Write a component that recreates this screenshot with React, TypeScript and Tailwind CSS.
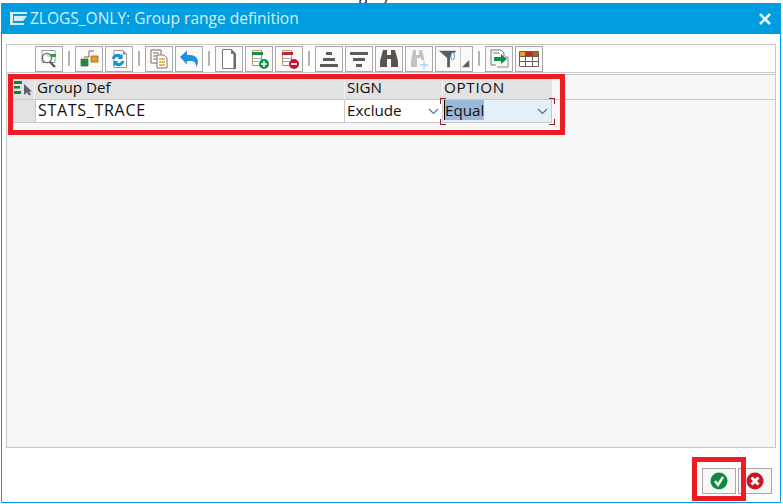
import type { ReactNode } from "react";

function ToolBtn({ children, className = "w-7" }: { children: ReactNode; className?: string }) {
  return (
    <div className={`flex h-[26px] shrink-0 items-center justify-center border border-[#a8a8a8] bg-[#fafafa] ${className}`}>
      <svg width="22" height="22" viewBox="0 0 22 22">
        {children}
      </svg>
    </div>
  );
}

function Sep() {
  return <div className="mx-[5px] h-[15px] w-[2px] shrink-0 bg-[#b4b4b4]" />;
}

function Chevron() {
  return (
    <svg width="11" height="7" viewBox="0 0 11 7" className="shrink-0 self-center">
      <path d="M1 1l4.5 4.5L10 1" fill="none" stroke="#5f7186" strokeWidth="1.2" />
    </svg>
  );
}

const rowIcon = (bar: string) => (
  <>
    <path d="M4.5 2.5h9v15h-9z" fill="#fff" stroke="#b5956f" />
    <path d="M4 4h11v3H4z" fill={bar} />
    <path d="M5 10.5h8M5 13.5h6" stroke="#9aa5ae" />
  </>
);

export default function App() {
  return (
    <div className="relative h-[504px] w-[783px] overflow-hidden bg-white font-['Open_Sans','Noto_Sans',sans-serif] text-[15.2px] text-[#111]">
      {/* what is left of the screen behind the popup */}
      <div className="flex h-[3px] items-end overflow-hidden pl-[327px] leading-[18px] whitespace-nowrap">
        Category Filter: Performance
      </div>

      <div className="ml-[1px] flex h-[500px] w-[780px] flex-col border border-t-0 border-[#009de0] bg-white">
        <div className="flex h-[31px] shrink-0 items-center bg-[#009de0] pl-[8px] pr-[8px] text-[#d9eff9]">
          <svg width="18" height="13" viewBox="0 0 18 13" className="shrink-0">
            <path d="M0 0h17v2H3v9h11v2H0z" fill="#d5ecf7" />
            <path d="M4 4h13l-4 5H4z" fill="#d5ecf7" />
          </svg>
          <span className="ml-[2px] text-[15.5px] leading-none">ZLOGS_ONLY: Group range definition</span>
          <svg width="14" height="14" viewBox="0 0 14 14" className="ml-auto shrink-0">
            <path d="M2 2l10 10M12 2L2 12" stroke="#e6f5fb" strokeWidth="2.6" />
          </svg>
        </div>

        <div className="mx-[4px] mt-[10px] flex h-[404px] shrink-0 flex-col border border-[#c8c8c8] bg-[#f7f7f7]">
          <div className="flex h-[28px] shrink-0 items-center border-b border-[#c8c8c8] bg-white pl-[28px]">
            <ToolBtn>
              <path d="M4 2.5h13v12H4z" fill="#fff" stroke="#9a9a9a" />
              <path d="M9 6h9v3H9z" fill="#2e9b46" />
              <circle cx="9" cy="10" r="4.6" fill="#fff" fillOpacity="0.7" stroke="#6d6d6d" strokeWidth="1.4" />
              <path d="M12 14l5 5" stroke="#555" strokeWidth="2.2" />
            </ToolBtn>
            <Sep />
            <ToolBtn>
              <path d="M11 3h5M11 3v6M6 9h5" fill="none" stroke="#7a6a58" />
              <path d="M3 11h7v7H3z" fill="#1e8a3c" stroke="#6d5c4a" strokeWidth="0.8" />
              <path d="M13 8h7v6h-7z" fill="#e8a21c" stroke="#8a6a2a" strokeWidth="0.8" />
            </ToolBtn>
            <div className="w-[2px]" />
            <ToolBtn>
              <path d="M6 2.5h9l3.5 3.5v13.5H6z" fill="#fff" stroke="#9a9a9a" />
              <path d="M15 2.5v4h3.5z" fill="#8a8a8a" />
              <path d="M4 11a5.5 5.5 0 0 1 9-4l1.5-1.5V11h-5l1.5-1.5a3 3 0 0 0-4.5 1.5zM16 13a5.5 5.5 0 0 1-9 4l-1.5 1.5V13h5L9 14.5a3 3 0 0 0 4.5-1.5z" fill="#1a8fd6" />
            </ToolBtn>
            <Sep />
            <ToolBtn>
              <path d="M3 2h10v13H3z" fill="#fff" stroke="#7a6a5a" />
              <path d="M5 5h6M5 8h6M5 11h6" stroke="#7a6a5a" />
              <path d="M9 7h7l3 3v10H9z" fill="#fff" stroke="#777" />
              <path d="M11 11h6M11 14h6M11 17h6" stroke="#e8a21c" strokeWidth="1.4" />
            </ToolBtn>
            <div className="w-[2px]" />
            <ToolBtn>
              <path d="M2 9l7-6.5v4.5h3c5 0 8 3 8 7 0 2-1 4-2 5 .5-4-2-6-5-6H9v3.5z" fill="#1b93dc" />
            </ToolBtn>
            <Sep />
            <ToolBtn>
              <path d="M4.5 1.5h9l4 4v15h-13z" fill="#fff" stroke="#777" />
              <path d="M17.5 6v15h-2V6z" fill="#666" />
              <path d="M13 1l5 5h-5z" fill="#777" />
            </ToolBtn>
            <div className="w-[2px]" />
            <ToolBtn>
              {rowIcon("#1e8a3c")}
              <circle cx="16" cy="16" r="5" fill="#10904a" />
              <path d="M13 16h6M16 13v6" stroke="#fff" strokeWidth="1.6" />
            </ToolBtn>
            <div className="w-[2px]" />
            <ToolBtn>
              {rowIcon("#bb2a34")}
              <circle cx="16" cy="16" r="5" fill="#cc0f2c" />
              <path d="M13 16h6" stroke="#fff" strokeWidth="1.8" />
            </ToolBtn>
            <Sep />
            <ToolBtn>
              <path d="M8 4h6v3H8zM5 10h12v3H5zM2 16h18v3H2z" fill="#5c5c5c" />
            </ToolBtn>
            <div className="w-[2px]" />
            <ToolBtn>
              <path d="M2 4h18v3H2zM5 10h12v3H5zM8 16h6v3H8z" fill="#5c5c5c" />
            </ToolBtn>
            <div className="w-[2px]" />
            <ToolBtn>
              <path d="M5 2h4v5h4V2h4l3 11v6h-7v-8H9v8H2v-6z" fill="#5e534b" />
            </ToolBtn>
            <div className="w-[2px]" />
            <ToolBtn>
              <path d="M5 2h3v5h3V2h3l2 8v2h-3v-2H9v9H3v-6z" fill="#c2c2c2" />
              <path d="M16 13v8M12 17h8" stroke="#9fd5ef" strokeWidth="1.4" />
            </ToolBtn>
            <div className="w-[2px]" />
            <div className="flex h-[26px] w-[38px] shrink-0 items-center border border-[#a8a8a8] bg-[#fafafa]">
              <svg width="24" height="22" viewBox="0 0 24 22" className="shrink-0 pl-[2px]">
                <path d="M1 2h19l-7 8v10h-3V10z" fill="#5c5c5c" />
                <ellipse cx="16" cy="8" rx="2" ry="4" fill="#fff" stroke="#4a86b0" />
              </svg>
              <svg width="12" height="24" viewBox="0 0 12 24" className="shrink-0 border-l border-[#c8c8c8]">
                <path d="M9 13v8H1z" fill="#5c5c5c" />
              </svg>
            </div>
            <Sep />
            <ToolBtn>
              <path d="M3 2h10l3 3v3" fill="none" stroke="#777" />
              <path d="M3 2v15h5" fill="none" stroke="#777" />
              <path d="M5 5h6" stroke="#777" />
              <path d="M6 9h7V6l6 5-6 5v-3H6z" fill="#0e8f46" />
              <path d="M17 9h3v10H9" fill="none" stroke="#888" />
            </ToolBtn>
            <div className="w-[2px]" />
            <ToolBtn>
              <path d="M1.5 3.5h19v15h-19z" fill="#fff" stroke="#6d6050" />
              <path d="M2 4h6v4H2z" fill="#e8a21c" />
              <path d="M8 4h6v4H8z" fill="#c0282a" />
              <path d="M14 4h6v4h-6z" fill="#bf5a1e" />
              <path d="M2 8.5h18M2 13.5h18M7.5 4v14M14.5 4v14" stroke="#6d6050" />
            </ToolBtn>
          </div>

          <div className="mt-[1px] flex h-[26px] shrink-0 flex-col justify-end border-y border-[#c8c8c8]">
            <div className="ml-[6px] flex h-[20px] w-[539px] bg-[#e2e2e2] leading-[17px]">
              <div className="flex w-[22px] items-center border-r border-[#f4f4f4]">
                <svg width="20" height="18" viewBox="0 0 20 18">
                  <path d="M1 1h8v3H1zM1 6h6v2.5H1zM1 11h7v3H1z" fill="#16803a" />
                  <path d="M11 4v11l3-2.5 2 3 2-1-2-3h3z" fill="#5a6470" />
                </svg>
              </div>
              <div className="w-[310px] border-r border-[#f4f4f4] pl-[2px]">Group Def</div>
              <div className="w-[97px] pl-[2px]">SIGN</div>
              <div className="flex-1 border-l border-[#f4f4f4] pl-[1px] tracking-[0.7px]">OPTION</div>
            </div>
          </div>

          <div className="ml-[6px] flex h-[23px] w-[539px] shrink-0 border-b border-[#c8c8c8] leading-[20px]">
            <div className="w-[22px] bg-[#e2e2e2]" />
            <div className="w-[310px] border-x border-[#c8c8c8] bg-white pl-[2px] text-[16px] tracking-[0.7px]">STATS_TRACE</div>
            <div className="flex w-[97px] justify-between bg-white pl-[2px] pr-[3px]">
              <span>Exclude</span>
              <Chevron />
            </div>
            <div className="relative flex w-[110px] justify-between border-x border-[#c8c8c8] bg-[#e3f0fa] pr-[3px]">
              <span className="ml-[1px] h-[20px] self-start border-l border-black bg-[#9bb8d8]">Equal</span>
              <Chevron />
              {/* corner marks of the focused cell */}
              <span className="absolute -left-[3px] -top-[2px] size-[6px] border-l border-t border-[#9c1c24]" />
              <span className="absolute -right-[4px] -top-[2px] size-[6px] border-r border-t border-[#9c1c24]" />
              <span className="absolute -bottom-[3px] -left-[3px] size-[6px] border-b border-l border-[#9c1c24]" />
              <span className="absolute -bottom-[3px] -right-[4px] size-[6px] border-b border-r border-[#9c1c24]" />
            </div>
          </div>
        </div>

        <div className="flex flex-1 items-start justify-end gap-[2px] pr-[8px] pt-[20px]">
          <div className="flex h-[26px] w-[34px] items-center justify-center border border-[#a8a8a8] bg-[#f7f7f7]">
            <svg width="18" height="18" viewBox="0 0 18 18">
              <circle cx="9" cy="9" r="8.5" fill="#0f8a3c" />
              <path d="M5 9l3 4 5-8" fill="none" stroke="#fff" strokeWidth="2.4" />
            </svg>
          </div>
          <div className="flex h-[26px] w-[34px] items-center justify-center border border-[#a8a8a8] bg-[#f7f7f7]">
            <svg width="18" height="18" viewBox="0 0 18 18">
              <circle cx="9" cy="9" r="8.5" fill="#cc1524" />
              <path d="M5.5 5.5l7 7M12.5 5.5l-7 7" stroke="#fff" strokeWidth="3" />
            </svg>
          </div>
        </div>
      </div>

      {/* red annotation frames drawn over the popup */}
      <div className="absolute left-[8px] top-[74px] h-[61px] w-[557px] border-[5px] border-[#ed1c24]" />
      <div className="absolute left-[692px] top-[457px] h-[44px] w-[54px] border-[5px] border-[#ed1c24]" />
    </div>
  );
}
